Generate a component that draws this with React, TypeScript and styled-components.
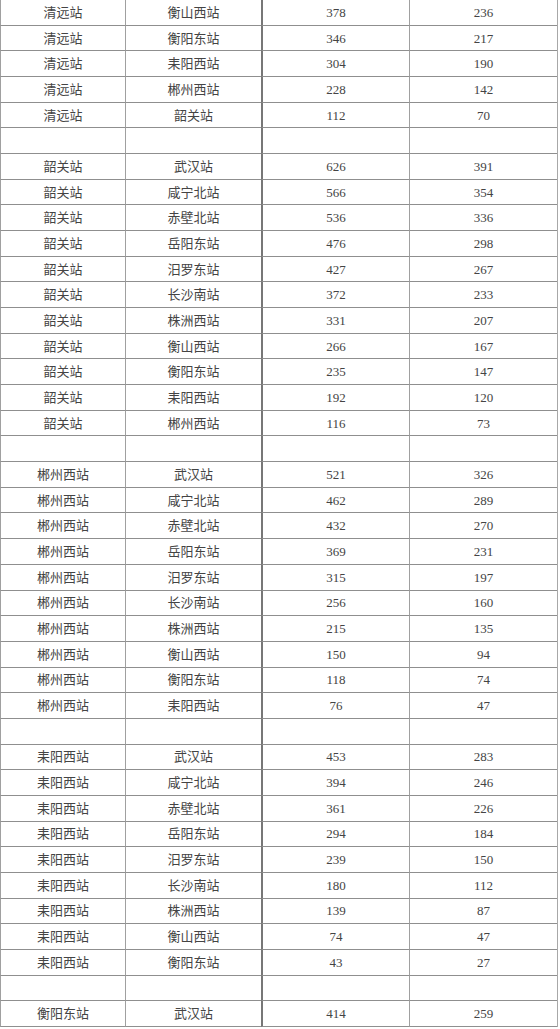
import React from 'react'
import styled, { createGlobalStyle } from 'styled-components'

type Row = [string, string, string, string] | null

const groups: { from: string; rows: [string, string, string][] }[] = [
  {
    from: '清远站',
    rows: [
      ['衡山西站', '378', '236'],
      ['衡阳东站', '346', '217'],
      ['耒阳西站', '304', '190'],
      ['郴州西站', '228', '142'],
      ['韶关站', '112', '70']
    ]
  },
  {
    from: '韶关站',
    rows: [
      ['武汉站', '626', '391'],
      ['咸宁北站', '566', '354'],
      ['赤壁北站', '536', '336'],
      ['岳阳东站', '476', '298'],
      ['汨罗东站', '427', '267'],
      ['长沙南站', '372', '233'],
      ['株洲西站', '331', '207'],
      ['衡山西站', '266', '167'],
      ['衡阳东站', '235', '147'],
      ['耒阳西站', '192', '120'],
      ['郴州西站', '116', '73']
    ]
  },
  {
    from: '郴州西站',
    rows: [
      ['武汉站', '521', '326'],
      ['咸宁北站', '462', '289'],
      ['赤壁北站', '432', '270'],
      ['岳阳东站', '369', '231'],
      ['汨罗东站', '315', '197'],
      ['长沙南站', '256', '160'],
      ['株洲西站', '215', '135'],
      ['衡山西站', '150', '94'],
      ['衡阳东站', '118', '74'],
      ['耒阳西站', '76', '47']
    ]
  },
  {
    from: '耒阳西站',
    rows: [
      ['武汉站', '453', '283'],
      ['咸宁北站', '394', '246'],
      ['赤壁北站', '361', '226'],
      ['岳阳东站', '294', '184'],
      ['汨罗东站', '239', '150'],
      ['长沙南站', '180', '112'],
      ['株洲西站', '139', '87'],
      ['衡山西站', '74', '47'],
      ['衡阳东站', '43', '27']
    ]
  },
  {
    from: '衡阳东站',
    rows: [['武汉站', '414', '259']]
  }
]

const rows: Row[] = groups.flatMap((g, i) => {
  const list: Row[] = g.rows.map(r => [g.from, r[0], r[1], r[2]])
  return i < groups.length - 1 ? [...list, null] : list
})

const GlobalStyle = createGlobalStyle`
  html, body {
    margin: 0;
    padding: 0;
    background: #fff;
  }
`

const Sheet = styled.div`
  display: grid;
  grid-template-columns: 125px 136px 148px 148px;
  grid-template-rows: repeat(40, 1fr);
  width: 557px;
  height: 1027px;
  font-family: 'Liberation Serif', 'Noto Sans CJK SC', serif;
  font-size: 13px;
  color: #444;
  border-right: 1px solid #a8a8a8;
`

const Line = styled.div`
  display: contents;
`

const Cell = styled.div<{ $split?: boolean }>`
  display: flex;
  align-items: center;
  justify-content: center;
  line-height: 1;
  border-bottom: 1px solid #8f8f8f;
  border-left: ${({ $split }) => ($split ? '2px solid #777' : '1px solid #a0a0a0')};
`

const App: React.FC = () => {
  return (
    <>
      <GlobalStyle />
      <Sheet>
        {rows.map((r, i) => (
          <Line key={i}>
            <Cell>{r ? r[0] : ''}</Cell>
            <Cell>{r ? r[1] : ''}</Cell>
            <Cell $split>{r ? r[2] : ''}</Cell>
            <Cell>{r ? r[3] : ''}</Cell>
          </Line>
        ))}
      </Sheet>
    </>
  )
}

export default App
